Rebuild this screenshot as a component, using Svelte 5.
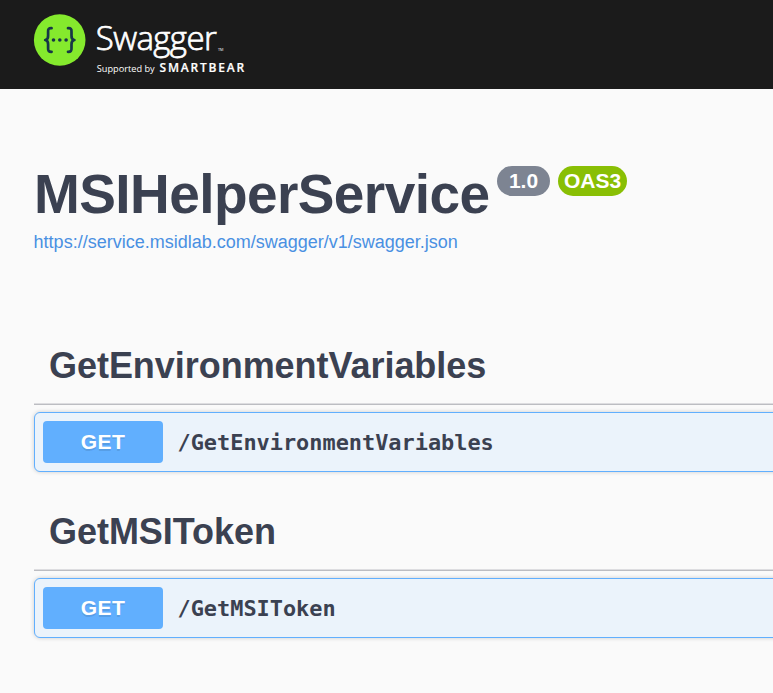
<script>
  const sections = [
    { name: 'GetEnvironmentVariables', method: 'GET', path: '/GetEnvironmentVariables' },
    { name: 'GetMSIToken', method: 'GET', path: '/GetMSIToken' }
  ];
</script>

<div class="page">
  <header class="topbar">
    <svg class="logo" width="220" height="70" viewBox="30 10 220 70" role="img" aria-label="Swagger, supported by SmartBear">
      <circle cx="59.7" cy="40" r="25.8" fill="#85ea2d" />
      <g fill="none" stroke="#173647" stroke-width="2.7" stroke-linecap="round" stroke-linejoin="round">
        <path d="M51.6 28.2 C48.8 28 47.9 29.2 48.1 31.8 V35.6 C48.2 38.2 47.3 39.7 45.2 40 C47.3 40.3 48.2 41.8 48.1 44.4 V48.2 C47.9 50.8 48.8 51.9 51.6 51.8" />
        <path d="M68 28.2 C70.8 28 71.7 29.2 71.5 31.8 V35.6 C71.4 38.2 72.3 39.7 74.4 40 C72.3 40.3 71.4 41.8 71.5 44.4 V48.2 C71.7 50.8 70.8 51.9 68 51.8" />
      </g>
      <g fill="#173647">
        <circle cx="53.5" cy="40" r="1.8" />
        <circle cx="59.8" cy="40" r="1.8" />
        <circle cx="66.1" cy="40" r="1.8" />
      </g>
      <g fill="#fff" font-family="'Open Sans', sans-serif">
        <text x="95.8" y="50.3" font-size="33" font-weight="300" stroke="#fff" stroke-width="0.75" textLength="121" lengthAdjust="spacing">Swagger</text>
        <text x="218" y="50.5" font-size="4" textLength="5.5" lengthAdjust="spacingAndGlyphs">TM</text>
        <text x="96.7" y="71.6" font-size="9.2" textLength="58" lengthAdjust="spacing">Supported by</text>
        <text x="159.6" y="72" font-size="12" font-weight="600" stroke="#fff" stroke-width="0.2" textLength="84.6" lengthAdjust="spacing">SMARTBEAR</text>
      </g>
    </svg>
  </header>

  <main>
    <div class="info">
      <div class="heading">
        <h1>MSIHelperService</h1>
        <span class="badge version">1.0</span>
        <span class="badge oas">OAS3</span>
      </div>
      <a href="https://service.msidlab.com/swagger/v1/swagger.json">https://service.msidlab.com/swagger/v1/swagger.json</a>
    </div>

    {#each sections as section}
      <section>
        <h2>{section.name}</h2>
        <div class="operation">
          <span class="method">{section.method}</span>
          <span class="path">{section.path}</span>
        </div>
      </section>
    {/each}
  </main>
</div>

<style>
  :global(body) {
    margin: 0;
    background: #fafafa;
  }
  .page {
    width: 100%;
    height: 693px;
    overflow: hidden;
    background: #fafafa;
    color: #3b4151;
    font-family: 'Liberation Sans', Arial, sans-serif;
  }
  .topbar {
    box-sizing: border-box;
    height: 89px;
    padding: 10px 30px;
    background: #1b1b1b;
  }
  .logo {
    display: block;
  }
  main {
    width: 800px;
    padding: 77px 0 0 34px;
  }
  .info {
    height: 161px;
  }
  .heading {
    display: flex;
    align-items: flex-start;
    height: 62px;
  }
  h1 {
    width: 455px;
    margin: 0 8px 0 0;
    font-size: 55px;
    line-height: 57px;
    font-weight: 700;
    letter-spacing: -0.58px;
    white-space: nowrap;
  }
  .badge {
    box-sizing: border-box;
    height: 30px;
    border-radius: 15px;
    color: #fff;
    font-size: 21px;
    line-height: 30px;
    font-weight: 700;
    text-align: center;
  }
  .version {
    width: 53px;
    margin-right: 8px;
    background: #7d8492;
  }
  .oas {
    width: 69px;
    background: #89bf04;
  }
  a {
    display: block;
    margin-left: -0.4px;
    color: #4990e2;
    font-size: 18px;
    line-height: 28px;
    text-decoration: none;
  }
  section {
    height: 166px;
  }
  h2 {
    box-sizing: border-box;
    height: 78px;
    margin: 0 0 7px;
    padding: 18px 15px 0;
    border-bottom: 1px solid #bcbdc2;
    box-shadow: inset 0 -1px #dddde0;
    font-size: 36px;
    line-height: 41px;
    font-weight: 700;
    letter-spacing: -0.04px;
  }
  .operation {
    box-sizing: border-box;
    display: flex;
    align-items: center;
    height: 60px;
    padding: 0 8px;
    border: 1px solid #61affe;
    border-radius: 6px;
    background: #ebf3fb;
    box-shadow: 0 0 4px rgba(0, 0, 0, 0.19);
  }
  .method {
    width: 120px;
    height: 42px;
    border-radius: 4px;
    background: #61affe;
    color: #fff;
    font-size: 21px;
    line-height: 42px;
    font-weight: 700;
    letter-spacing: 0.4px;
    text-align: center;
    text-shadow: 0 1.5px 0 rgba(0, 0, 0, 0.1);
  }
  .path {
    margin-left: 14.5px;
    font-family: 'DejaVu Sans Mono', monospace;
    font-size: 21.9px;
    font-weight: 700;
  }
</style>
